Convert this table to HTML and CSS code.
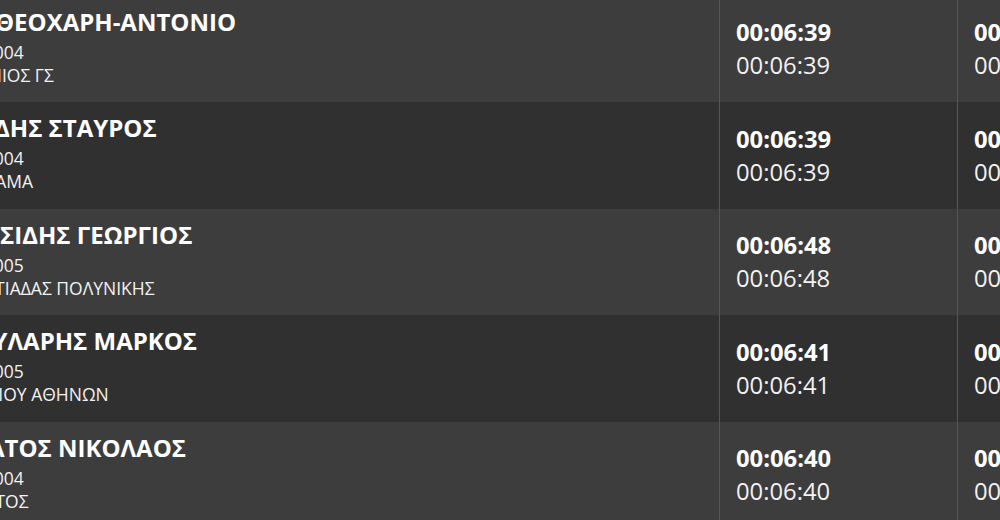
FILE: index.html
```html
<!DOCTYPE html>
<html lang="el">
<head>
<meta charset="utf-8">
<title>Αποτελέσματα</title>
<link rel="stylesheet" href="styles.css">
</head>
<body>
<div class="board">
  <div class="row">
    <div class="athlete"><div class="name">ΘΕΟΧΑΡΗ-ΑΝΤΟΝΙΟ</div><div class="meta year">004</div><div class="meta club">ΝΙΟΣ ΓΣ</div></div>
    <div class="time"><div class="t-main">00:06:39</div><div class="t-sub">00:06:39</div></div>
    <div class="time"><div class="t-main">00:06:39</div><div class="t-sub">00:06:39</div></div>
  </div>
  <div class="row">
    <div class="athlete"><div class="name">ΔΗΣ ΣΤΑΥΡΟΣ</div><div class="meta year">004</div><div class="meta club">ΑΜΑ</div></div>
    <div class="time"><div class="t-main">00:06:39</div><div class="t-sub">00:06:39</div></div>
    <div class="time"><div class="t-main">00:06:39</div><div class="t-sub">00:06:39</div></div>
  </div>
  <div class="row">
    <div class="athlete"><div class="name">ΥΣΙΔΗΣ ΓΕΩΡΓΙΟΣ</div><div class="meta year">005</div><div class="meta club">ΤΙΑΔΑΣ ΠΟΛΥΝΙΚΗΣ</div></div>
    <div class="time"><div class="t-main">00:06:48</div><div class="t-sub">00:06:48</div></div>
    <div class="time"><div class="t-main">00:06:48</div><div class="t-sub">00:06:48</div></div>
  </div>
  <div class="row">
    <div class="athlete"><div class="name">ΥΛΑΡΗΣ ΜΑΡΚΟΣ</div><div class="meta year">005</div><div class="meta club">ΙΟΥ ΑΘΗΝΩΝ</div></div>
    <div class="time"><div class="t-main">00:06:41</div><div class="t-sub">00:06:41</div></div>
    <div class="time"><div class="t-main">00:06:41</div><div class="t-sub">00:06:41</div></div>
  </div>
  <div class="row">
    <div class="athlete"><div class="name">ΑΤΟΣ ΝΙΚΟΛΑΟΣ</div><div class="meta year">004</div><div class="meta club">ΤΟΣ</div></div>
    <div class="time"><div class="t-main">00:06:40</div><div class="t-sub">00:06:40</div></div>
    <div class="time"><div class="t-main">00:06:40</div><div class="t-sub">00:06:40</div></div>
  </div>
</div>
</body>
</html>
```

FILE: styles.css
```css
html, body {
  margin: 0;
  padding: 0;
  background: #2f2f2f;
  overflow: hidden;
  width: 1000px;
  height: 520px;
}
body {
  font-family: "Open Sans", "Noto Sans", sans-serif;
  color: #ffffff;
}
.board {
  margin-top: -4.3px;
  width: 1300px;
}
.row {
  display: grid;
  grid-template-columns: 719px 238px 238px;
  height: 106.6px;
  background: #3d3d3d;
}
.row:nth-child(even) {
  background: #303030;
}
.athlete {
  padding-top: 7px;
  white-space: nowrap;
}
.name {
  font-weight: 700;
  font-size: 24px;
  line-height: 38px;
  margin-left: -5px;
}
.meta {
  font-size: 17.5px;
  line-height: 23px;
  color: #f2f2f2;
}
.year {
  margin-left: -6.3px;
}

/* the athlete column is scrolled out of view on the left;
   each line shows only the tail of its text */
.row:nth-child(1) .club { margin-left: -11.3px; }
.row:nth-child(2) .name { margin-left: -6px; }
.row:nth-child(2) .club { margin-left: -4.8px; }
.row:nth-child(3) .name { margin-left: -15px; }
.row:nth-child(3) .club { margin-left: -4.9px; }
.row:nth-child(4) .name { margin-left: -7.5px; }
.row:nth-child(4) .club { margin-left: -1.7px; }
.row:nth-child(5) .name { margin-left: -12px; }
.row:nth-child(5) .club { margin-left: -4.6px; }

.time {
  border-left: 1px solid #565656;
  padding-left: 16px;
  display: flex;
  flex-direction: column;
  justify-content: center;
  white-space: nowrap;
}
.t-main {
  font-weight: 700;
  font-size: 23.8px;
  line-height: 33px;
}
.t-sub {
  font-size: 23.8px;
  line-height: 33px;
  color: #f2f2f2;
}
```
